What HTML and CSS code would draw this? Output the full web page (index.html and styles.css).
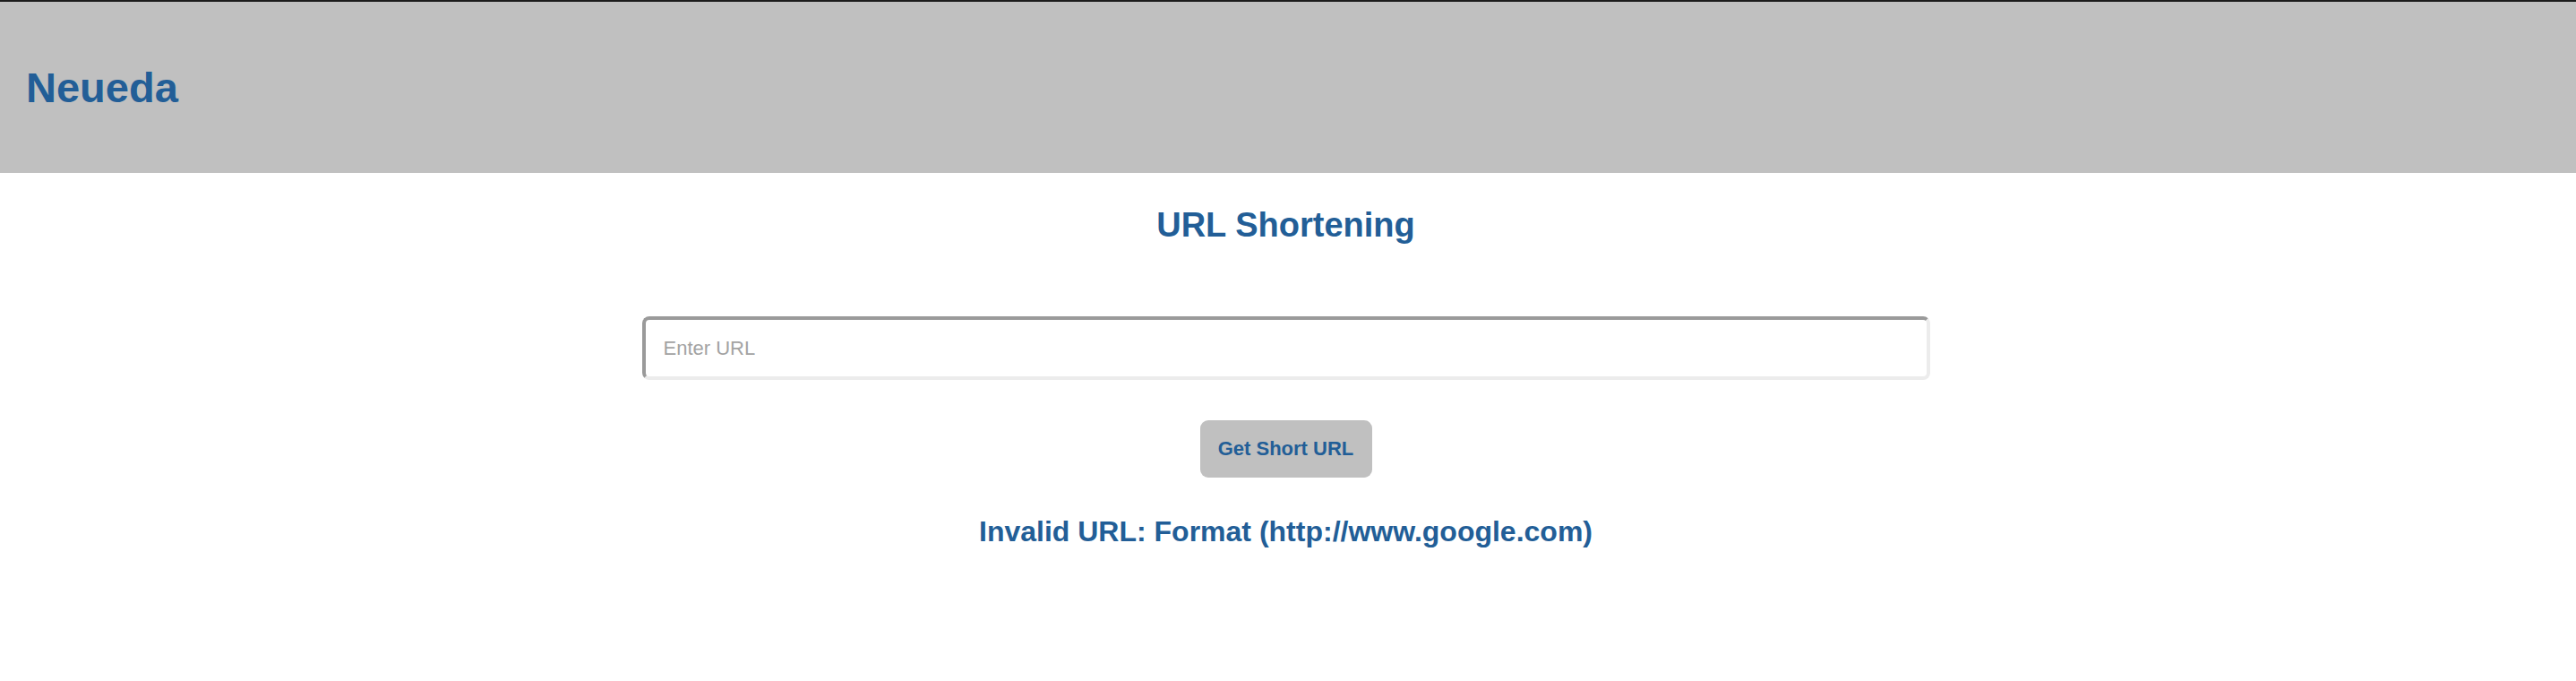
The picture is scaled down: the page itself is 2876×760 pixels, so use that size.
FILE: index.html
```html
<!DOCTYPE html>
<html lang="en">
<head>
<meta charset="utf-8">
<title>Neueda - URL Shortening</title>
<link rel="stylesheet" href="styles.css">
</head>
<body>
<header class="topbar">
  <h1 class="brand">Neueda</h1>
</header>
<main class="content">
  <h2 class="title">URL Shortening</h2>
  <form class="shorten-form" onsubmit="return false;">
    <input class="url-input" type="text" placeholder="Enter URL">
    <button class="submit-btn" type="button">Get Short URL</button>
  </form>
  <p class="error">Invalid URL: Format (http://www.google.com)</p>
</main>
</body>
</html>
```

FILE: styles.css
```css
html, body {
  margin: 0;
  padding: 0;
  background: #ffffff;
}

body {
  font-family: "Liberation Sans", Arial, sans-serif;
  color: #225e97;
  border-top: 2px solid #1c1c1c;
}

.topbar {
  height: 191px;
  background: #c0c0c0;
  display: flex;
  align-items: center;
  padding-left: 29px;
}

.brand {
  margin: 0;
  font-size: 47px;
  line-height: 54px;
  font-weight: bold;
  color: #225e97;
}

.content {
  display: flex;
  flex-direction: column;
  align-items: center;
  padding-right: 5px;
}

.title {
  margin: 36px 0 0;
  font-size: 38px;
  line-height: 44px;
  font-weight: bold;
  color: #225e97;
}

.shorten-form {
  width: 50vw;
  display: flex;
  flex-direction: column;
  align-items: center;
  margin-top: 80px;
}

.url-input {
  box-sizing: border-box;
  width: 100%;
  height: 71px;
  border-style: solid;
  border-width: 4px;
  border-top-color: #9a9a9a;
  border-left-color: #9a9a9a;
  border-right-color: #ececec;
  border-bottom-color: #ececec;
  border-radius: 8px;
  padding: 0 20px;
  font-family: "Liberation Sans", Arial, sans-serif;
  font-size: 22px;
  color: #333333;
  outline: none;
  background: #ffffff;
}

.url-input::placeholder {
  color: #a3a3a3;
}

.submit-btn {
  margin-top: 45px;
  width: 192px;
  height: 64px;
  border: none;
  border-radius: 9px;
  background: #c0c0c0;
  color: #225e97;
  font-family: "Liberation Sans", Arial, sans-serif;
  font-size: 22px;
  font-weight: bold;
  padding: 0;
  cursor: pointer;
}

.error {
  margin: 42px 0 0;
  font-size: 32px;
  line-height: 37px;
  font-weight: bold;
  color: #225e97;
}
```
